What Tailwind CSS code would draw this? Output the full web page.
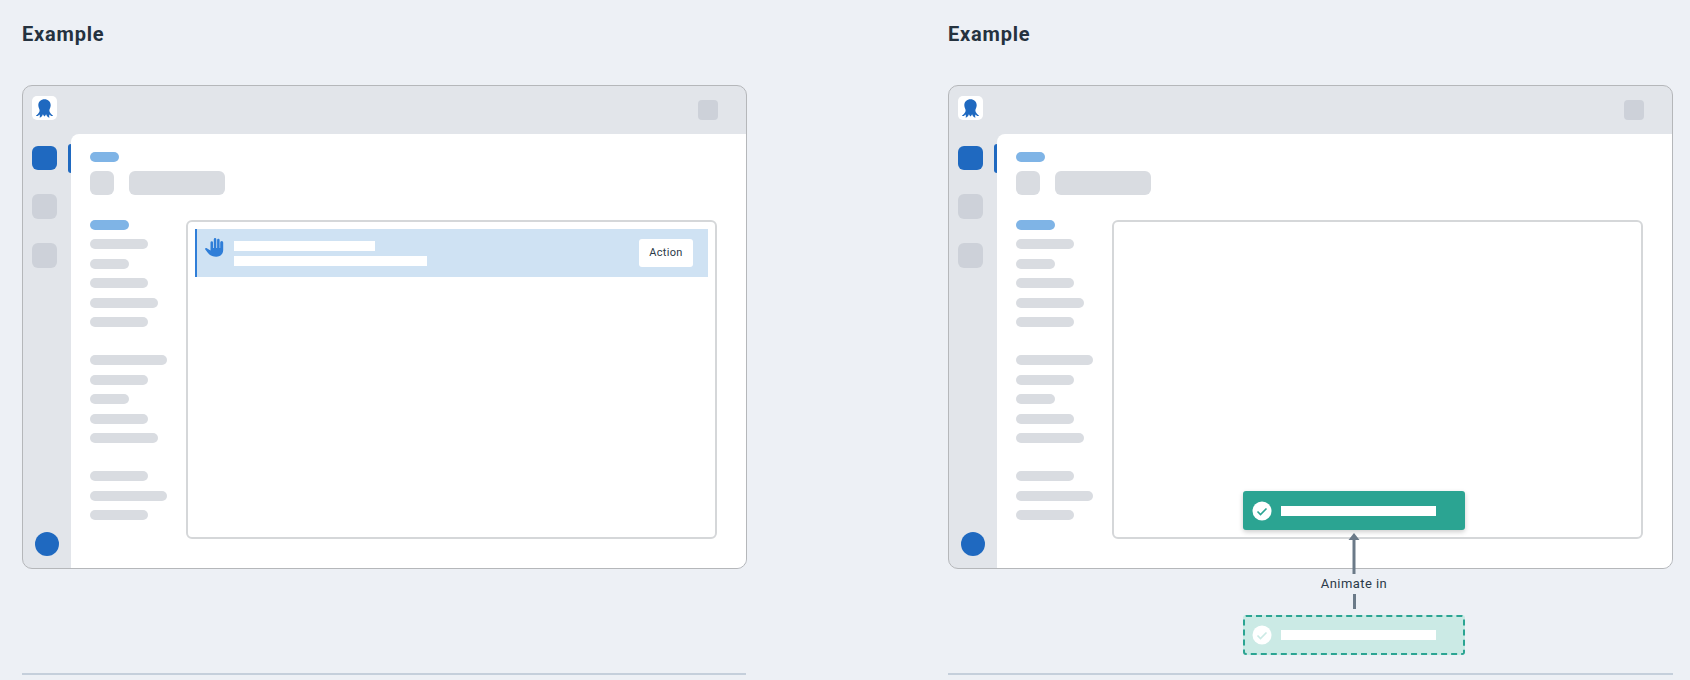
<!DOCTYPE html>
<html lang="en">
<head>
  <meta charset="UTF-8">
  <title>Example</title>
  <script src="https://cdn.jsdelivr.net/npm/@tailwindcss/browser@4"></script>
</head>
<body class="bg-[#edf0f5] font-['Roboto',sans-serif] overflow-hidden">
  <div class="flex gap-[201px] pl-[22px] h-[680px] w-[1690px]">

    <!-- left example -->
    <section class="w-[725px] h-[680px] relative">
      <h2 class="h-[85px] pt-[21px] text-[20px] leading-[26px] font-bold tracking-[0.8px] text-[#25323f]">Example</h2>
      <div class="h-[484px] border border-[#b5b7ba] rounded-[10px] overflow-hidden bg-[#e2e5ea]">
        <div class="h-[48px] flex justify-between pl-[9px] pr-[28px] pt-[10px]">
          <div class="w-[25px] h-[24px] bg-white rounded-[5px] flex items-center justify-center">
            <svg width="19" height="19" viewBox="0 0 19 19" fill="#1f69c0"><path d="M9.500 .3C6 .3 3.300 2.800 3.300 6.200 3.300 9 5 10 4.600 12 4.300 13.600 2.600 15.600 .8 16.800 2.200 17.600 3.600 16.800 4.600 15.600 4.900 16.800 5 17.800 4.600 18.700 6.200 18.300 7.400 16.900 7.900 15.200 8.300 16 8.900 16.800 9.500 17.400 10.100 16.800 10.700 16 11.100 15.200 11.600 16.900 12.800 18.300 14.400 18.700 14 17.800 14.100 16.800 14.400 15.600 15.400 16.800 16.800 17.600 18.200 16.800 16.400 15.600 14.700 13.600 14.400 12 14 10 15.700 9 15.700 6.200 15.700 2.800 13 .3 9.500 .3z"/></svg>
          </div>
          <div class="w-[20px] h-[20px] mt-[4px] bg-[#cdd1d9] rounded-[4px]"></div>
        </div>
        <div class="flex h-[434px]">
          <div class="w-[48px] relative pl-[9px] pt-[12px] flex flex-col gap-[24px]">
            <div class="w-[25px] h-[24px] bg-[#1f69c0] rounded-[6px]"></div>
            <div class="w-[25px] h-[25px] bg-[#cdd1d9] rounded-[6px]"></div>
            <div class="w-[25px] h-[25px] bg-[#cdd1d9] rounded-[6px]"></div>
            <div class="absolute left-[45px] top-[10px] w-[3px] h-[29px] bg-[#1f69c0] rounded-l-[3px]"></div>
            <div class="absolute left-[12px] top-[398px] w-[24px] h-[24px] bg-[#1f69c0] rounded-full"></div>
          </div>
          <div class="flex-1 bg-white rounded-tl-[8px] pl-[19px] pt-[18px]">
            <div class="w-[29px] h-[10px] bg-[#7fb4e6] rounded-full"></div>
            <div class="flex gap-[15px] mt-[9px]">
              <div class="w-[24px] h-[24px] bg-[#d9dce1] rounded-[6px]"></div>
              <div class="w-[96px] h-[24px] bg-[#d9dce1] rounded-[6px]"></div>
            </div>
            <div class="flex mt-[25px]">
              <div class="w-[96px] flex flex-col gap-[9.4px]">
                <div class="w-[39px] h-[10px] bg-[#7fb4e6] rounded-full"></div>
                <div class="w-[58px] h-[10px] bg-[#d9dce1] rounded-full"></div>
                <div class="w-[39px] h-[10px] bg-[#d9dce1] rounded-full"></div>
                <div class="w-[58px] h-[10px] bg-[#d9dce1] rounded-full"></div>
                <div class="w-[67.5px] h-[10px] bg-[#d9dce1] rounded-full"></div>
                <div class="w-[58px] h-[10px] bg-[#d9dce1] rounded-full"></div>
                <div class="w-[77px] h-[10px] mt-[19px] bg-[#d9dce1] rounded-full"></div>
                <div class="w-[58px] h-[10px] bg-[#d9dce1] rounded-full"></div>
                <div class="w-[39px] h-[10px] bg-[#d9dce1] rounded-full"></div>
                <div class="w-[58px] h-[10px] bg-[#d9dce1] rounded-full"></div>
                <div class="w-[67.5px] h-[10px] bg-[#d9dce1] rounded-full"></div>
                <div class="w-[58px] h-[10px] mt-[19px] bg-[#d9dce1] rounded-full"></div>
                <div class="w-[77px] h-[10px] bg-[#d9dce1] rounded-full"></div>
                <div class="w-[58px] h-[10px] bg-[#d9dce1] rounded-full"></div>
              </div>
              <div class="w-[531px] h-[319px] border-2 border-[#d5d7d9] rounded-[6px] p-[7px]">
                <div class="h-[48px] bg-[#cfe2f3] border-l-2 border-[#2f7ed8] flex items-center pl-[8px] pr-[15px]">
                  <svg class="self-start mt-[9px]" width="19" height="19" viewBox="0 0 19 19" fill="#2f7ed8"><path d="M5.500 4.500a1.250 1.250 0 0 1 2.500 0V10h.8V1.300a1.250 1.250 0 0 1 2.500 0V10h.8V2a1.250 1.250 0 0 1 2.500 0V10h.6V4.500a1.500 1.500 0 0 1 3 0V12c0 4-3 6.700-7 6.700-3.500 0-6-1.200-8-3.500L.3 11.500c-.6-.8.4-1.900 1.500-1.300l3.700 2.300z"/></svg>
                  <div class="ml-[10px] flex flex-col gap-[5px]">
                    <div class="w-[141px] h-[10px] bg-white"></div>
                    <div class="w-[193px] h-[10px] bg-white"></div>
                  </div>
                  <div class="ml-auto w-[54px] h-[28px] bg-white rounded-[3px] flex items-center justify-center text-[11px] tracking-[0.3px] text-[#2b3a48]">Action</div>
                </div>
              </div>
            </div>
          </div>
        </div>
      </div>
      <div class="absolute left-0 top-[673px] w-[724px] h-[2px] bg-[#c5cfdb]"></div>
    </section>

    <!-- right example -->
    <section class="w-[725px] h-[680px] relative">
      <h2 class="h-[85px] pt-[21px] text-[20px] leading-[26px] font-bold tracking-[0.8px] text-[#25323f]">Example</h2>
      <div class="h-[484px] border border-[#b5b7ba] rounded-[10px] overflow-hidden bg-[#e2e5ea]">
        <div class="h-[48px] flex justify-between pl-[9px] pr-[28px] pt-[10px]">
          <div class="w-[25px] h-[24px] bg-white rounded-[5px] flex items-center justify-center">
            <svg width="19" height="19" viewBox="0 0 19 19" fill="#1f69c0"><path d="M9.500 .3C6 .3 3.300 2.800 3.300 6.200 3.300 9 5 10 4.600 12 4.300 13.600 2.600 15.600 .8 16.800 2.200 17.600 3.600 16.800 4.600 15.600 4.900 16.800 5 17.800 4.600 18.700 6.200 18.300 7.400 16.900 7.900 15.200 8.300 16 8.900 16.800 9.500 17.400 10.100 16.800 10.700 16 11.100 15.200 11.600 16.900 12.800 18.300 14.400 18.700 14 17.800 14.100 16.800 14.400 15.600 15.400 16.800 16.800 17.600 18.200 16.800 16.400 15.600 14.700 13.600 14.400 12 14 10 15.700 9 15.700 6.200 15.700 2.800 13 .3 9.500 .3z"/></svg>
          </div>
          <div class="w-[20px] h-[20px] mt-[4px] bg-[#cdd1d9] rounded-[4px]"></div>
        </div>
        <div class="flex h-[434px]">
          <div class="w-[48px] relative pl-[9px] pt-[12px] flex flex-col gap-[24px]">
            <div class="w-[25px] h-[24px] bg-[#1f69c0] rounded-[6px]"></div>
            <div class="w-[25px] h-[25px] bg-[#cdd1d9] rounded-[6px]"></div>
            <div class="w-[25px] h-[25px] bg-[#cdd1d9] rounded-[6px]"></div>
            <div class="absolute left-[45px] top-[10px] w-[3px] h-[29px] bg-[#1f69c0] rounded-l-[3px]"></div>
            <div class="absolute left-[12px] top-[398px] w-[24px] h-[24px] bg-[#1f69c0] rounded-full"></div>
          </div>
          <div class="flex-1 bg-white rounded-tl-[8px] pl-[19px] pt-[18px]">
            <div class="w-[29px] h-[10px] bg-[#7fb4e6] rounded-full"></div>
            <div class="flex gap-[15px] mt-[9px]">
              <div class="w-[24px] h-[24px] bg-[#d9dce1] rounded-[6px]"></div>
              <div class="w-[96px] h-[24px] bg-[#d9dce1] rounded-[6px]"></div>
            </div>
            <div class="flex mt-[25px]">
              <div class="w-[96px] flex flex-col gap-[9.4px]">
                <div class="w-[39px] h-[10px] bg-[#7fb4e6] rounded-full"></div>
                <div class="w-[58px] h-[10px] bg-[#d9dce1] rounded-full"></div>
                <div class="w-[39px] h-[10px] bg-[#d9dce1] rounded-full"></div>
                <div class="w-[58px] h-[10px] bg-[#d9dce1] rounded-full"></div>
                <div class="w-[67.5px] h-[10px] bg-[#d9dce1] rounded-full"></div>
                <div class="w-[58px] h-[10px] bg-[#d9dce1] rounded-full"></div>
                <div class="w-[77px] h-[10px] mt-[19px] bg-[#d9dce1] rounded-full"></div>
                <div class="w-[58px] h-[10px] bg-[#d9dce1] rounded-full"></div>
                <div class="w-[39px] h-[10px] bg-[#d9dce1] rounded-full"></div>
                <div class="w-[58px] h-[10px] bg-[#d9dce1] rounded-full"></div>
                <div class="w-[67.5px] h-[10px] bg-[#d9dce1] rounded-full"></div>
                <div class="w-[58px] h-[10px] mt-[19px] bg-[#d9dce1] rounded-full"></div>
                <div class="w-[77px] h-[10px] bg-[#d9dce1] rounded-full"></div>
                <div class="w-[58px] h-[10px] bg-[#d9dce1] rounded-full"></div>
              </div>
              <div class="w-[531px] h-[319px] border-2 border-[#d5d7d9] rounded-[6px]"></div>
            </div>
          </div>
        </div>
      </div>

      <!-- toast annotation, lies over the window -->
      <div class="absolute left-[295px] top-[491px] w-[222px] flex flex-col items-center">
        <div class="w-full h-[39px] bg-[#2ba492] rounded-[3px] shadow-[0_2px_5px_rgba(0,0,0,0.2)] flex items-center pl-[9px]">
          <svg width="20" height="20" viewBox="0 0 20 20"><circle cx="10" cy="10" r="9.500" fill="#fff"/><path d="M5.500 10.500l3 3 6-6" fill="none" stroke="#2ba492" stroke-width="1.600"/></svg>
          <div class="ml-[9px] w-[155px] h-[10px] bg-white"></div>
        </div>
        <svg class="mt-[3px]" width="12" height="41" viewBox="0 0 12 41"><path d="M6 0l5.500 7H.5z" fill="#6b7a88"/><path d="M6 6v35" stroke="#6b7a88" stroke-width="3"/></svg>
        <div class="h-[20px] text-[13px] leading-[20px] tracking-[0.45px] text-[#2b3a48]">Animate in</div>
        <div class="w-[3px] h-[15px] bg-[#6b7a88]"></div>
        <div class="mt-[6px] w-full h-[40px] bg-[#cbeae5] border-2 border-dashed border-[#2ba492] rounded-[3px] flex items-center pl-[7px]">
          <svg width="20" height="20" viewBox="0 0 20 20"><circle cx="10" cy="10" r="9.500" fill="#fff"/><path d="M5.500 10.500l3 3 6-6" fill="none" stroke="#cbeae5" stroke-width="1.600"/></svg>
          <div class="ml-[9px] w-[155px] h-[10px] bg-white"></div>
        </div>
      </div>
      <div class="absolute left-0 top-[673px] w-[725px] h-[2px] bg-[#c5cfdb]"></div>
    </section>
  </div>
</body>
</html>
